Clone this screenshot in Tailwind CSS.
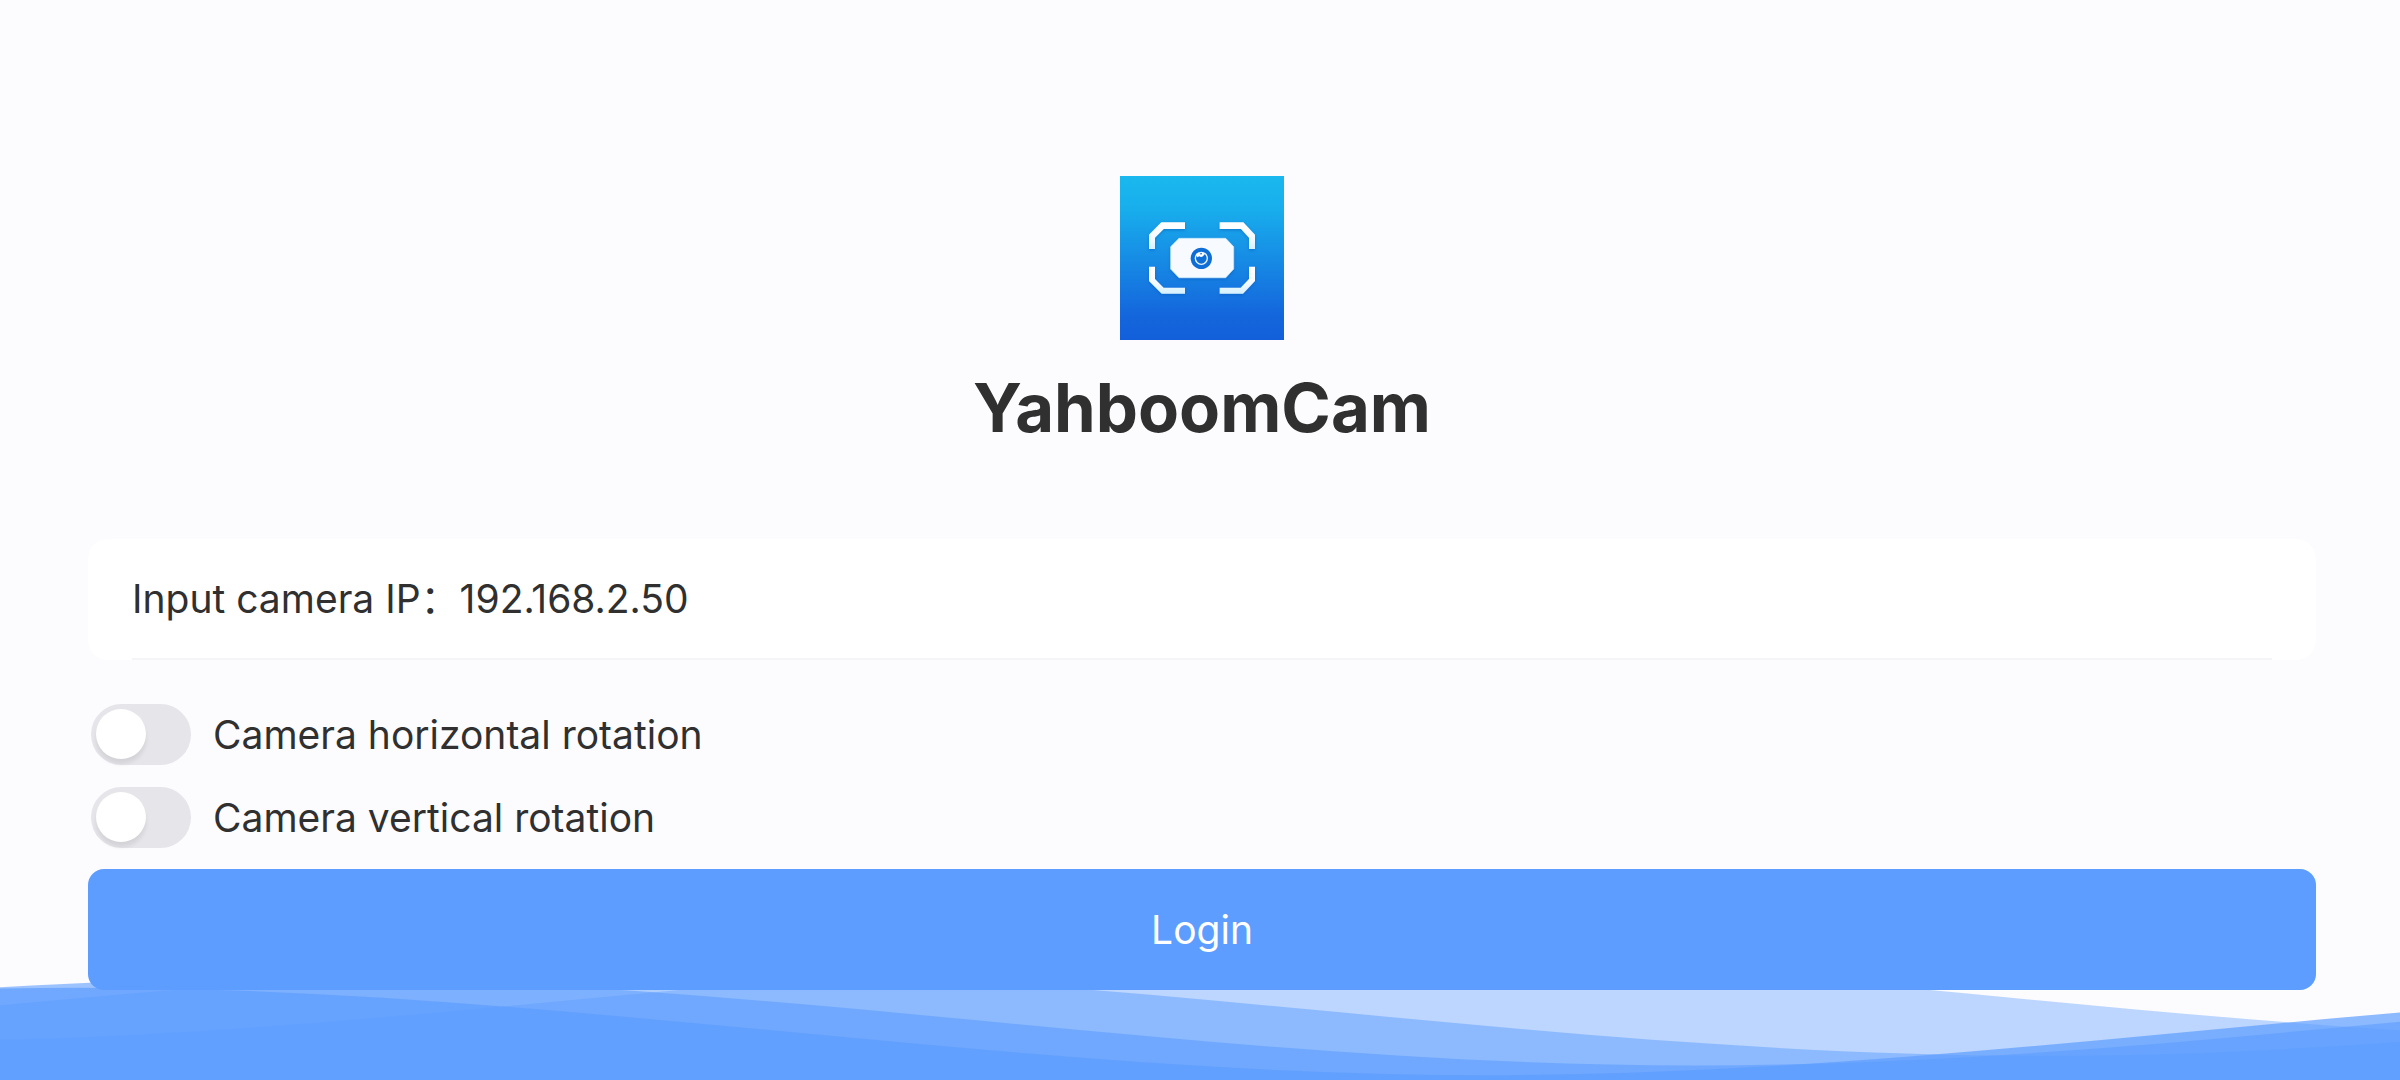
<!DOCTYPE html>
<html lang="en">
<head>
  <meta charset="UTF-8" />
  <meta name="viewport" content="width=device-width, initial-scale=1.0" />
  <title>YahboomCam</title>
  <script src="https://cdn.jsdelivr.net/npm/@tailwindcss/browser@4"></script>
</head>
<body class="relative min-h-screen overflow-x-hidden bg-[#fcfcff] text-[#303030] font-[Inter,'Noto_Sans_CJK_SC',sans-serif]">
  <!-- waves along the bottom edge -->
  <svg class="absolute bottom-0 left-0 w-full h-[136px]" viewBox="0 24 150 28" preserveAspectRatio="none" aria-hidden="true">
    <defs>
      <path id="wave" d="M-160 44c30 0 58-18 88-18s58 18 88 18 58-18 88-18 58 18 88 18v44h-352z" />
    </defs>
    <g fill="#5d9dff">
      <use href="#wave" x="-22.5" y="0" fill-opacity="0.4" />
      <use href="#wave" x="111.5" y="3" fill-opacity="0.5" />
      <use href="#wave" x="90" y="5" fill-opacity="0.6" />
      <use href="#wave" x="77" y="7" fill-opacity="0.7" />
    </g>
  </svg>

  <main class="relative flex flex-col pt-44 pl-[88px] pr-[84px]">
    <div class="flex flex-col items-center">
      <svg class="size-[164px]" viewBox="63 48 492 492" role="img" aria-label="YahboomCam logo">
        <defs>
          <linearGradient id="sky" x1="0" y1="0" x2="0" y2="1">
            <stop offset="0" stop-color="#1ab8ef" />
            <stop offset="0.2" stop-color="#18aeec" />
            <stop offset="0.55" stop-color="#1687e4" />
            <stop offset="0.85" stop-color="#1466dc" />
            <stop offset="1" stop-color="#135fdb" />
          </linearGradient>
          <linearGradient id="frame" x1="0" y1="0" x2="0" y2="1">
            <stop offset="0" stop-color="#fff" />
            <stop offset="0.6" stop-color="#f4fbff" />
            <stop offset="1" stop-color="#d3f1ff" />
          </linearGradient>
          <filter id="glow" x="-20%" y="-20%" width="140%" height="140%">
            <feDropShadow dx="0" dy="4" stdDeviation="5" flood-color="#0a4fb5" flood-opacity="0.45" />
          </filter>
        </defs>
        <rect x="63" y="48" width="492" height="492" fill="url(#sky)" />
        <g fill="url(#frame)" filter="url(#glow)">
          <path d="M150 267V224L187 187H258V207H194L168 233V267z" />
          <path d="M468 267V224L433 187H362V207H426L450 233V267z" />
          <path d="M150 320V363L188 401H258V383H194L168 357V320z" />
          <path d="M468 320V363L432 401H362V383H425L450 357V320z" />
          <path d="M240 235H380L404 260V327L380 353H240L215 327V260z" fill="#f7fbff" stroke="#c4ebfd" stroke-width="2" />
        </g>
        <circle cx="307" cy="295" r="32" fill="#0f6dd6" />
        <circle cx="307" cy="295" r="18" fill="#0f6dd6" stroke="#e9f5ff" stroke-width="4" />
        <path d="M291 284C295 278 299 277 303 280L306 285L310 278L318 281L312 289Q306 293 301 289L295 292z" fill="#fff" />
      </svg>
      <h1 class="mt-7 text-[67px] leading-[80px] font-bold">YahboomCam</h1>
    </div>

    <form class="mt-[91px] flex flex-col text-[39px] leading-[60px]" onsubmit="event.preventDefault()">
      <div class="flex h-[121px] flex-col rounded-[20px] bg-white px-11">
        <div class="flex flex-1 items-center border-b-2 border-[#f5f5f8]">
          <label for="ip" class="shrink-0">Input camera IP：</label>
          <input type="text" id="ip" value="192.168.2.50" class="min-w-0 flex-1 bg-transparent outline-none" />
        </div>
      </div>

      <div class="mt-11 mb-[21px] flex flex-col gap-[22px] pl-[3px]">
        <div class="flex items-center gap-[22px]">
          <input type="checkbox" role="switch" id="horizontal" class="relative h-[61px] w-[100px] appearance-none rounded-full bg-[#e5e5ea] before:absolute before:top-[5px] before:left-[5px] before:size-[50px] before:rounded-full before:bg-white before:shadow-[0_5px_4px_rgba(0,0,0,0.08)] checked:bg-[#5d9dff] checked:before:left-[45px]" />
          <label for="horizontal">Camera horizontal rotation</label>
        </div>
        <div class="flex items-center gap-[22px]">
          <input type="checkbox" role="switch" id="vertical" class="relative h-[61px] w-[100px] appearance-none rounded-full bg-[#e5e5ea] before:absolute before:top-[5px] before:left-[5px] before:size-[50px] before:rounded-full before:bg-white before:shadow-[0_5px_4px_rgba(0,0,0,0.08)] checked:bg-[#5d9dff] checked:before:left-[45px]" />
          <label for="vertical">Camera vertical rotation</label>
        </div>
      </div>

      <button type="submit" class="h-[121px] rounded-2xl bg-[#5d9dff] text-white">Login</button>
    </form>
  </main>
</body>
</html>
